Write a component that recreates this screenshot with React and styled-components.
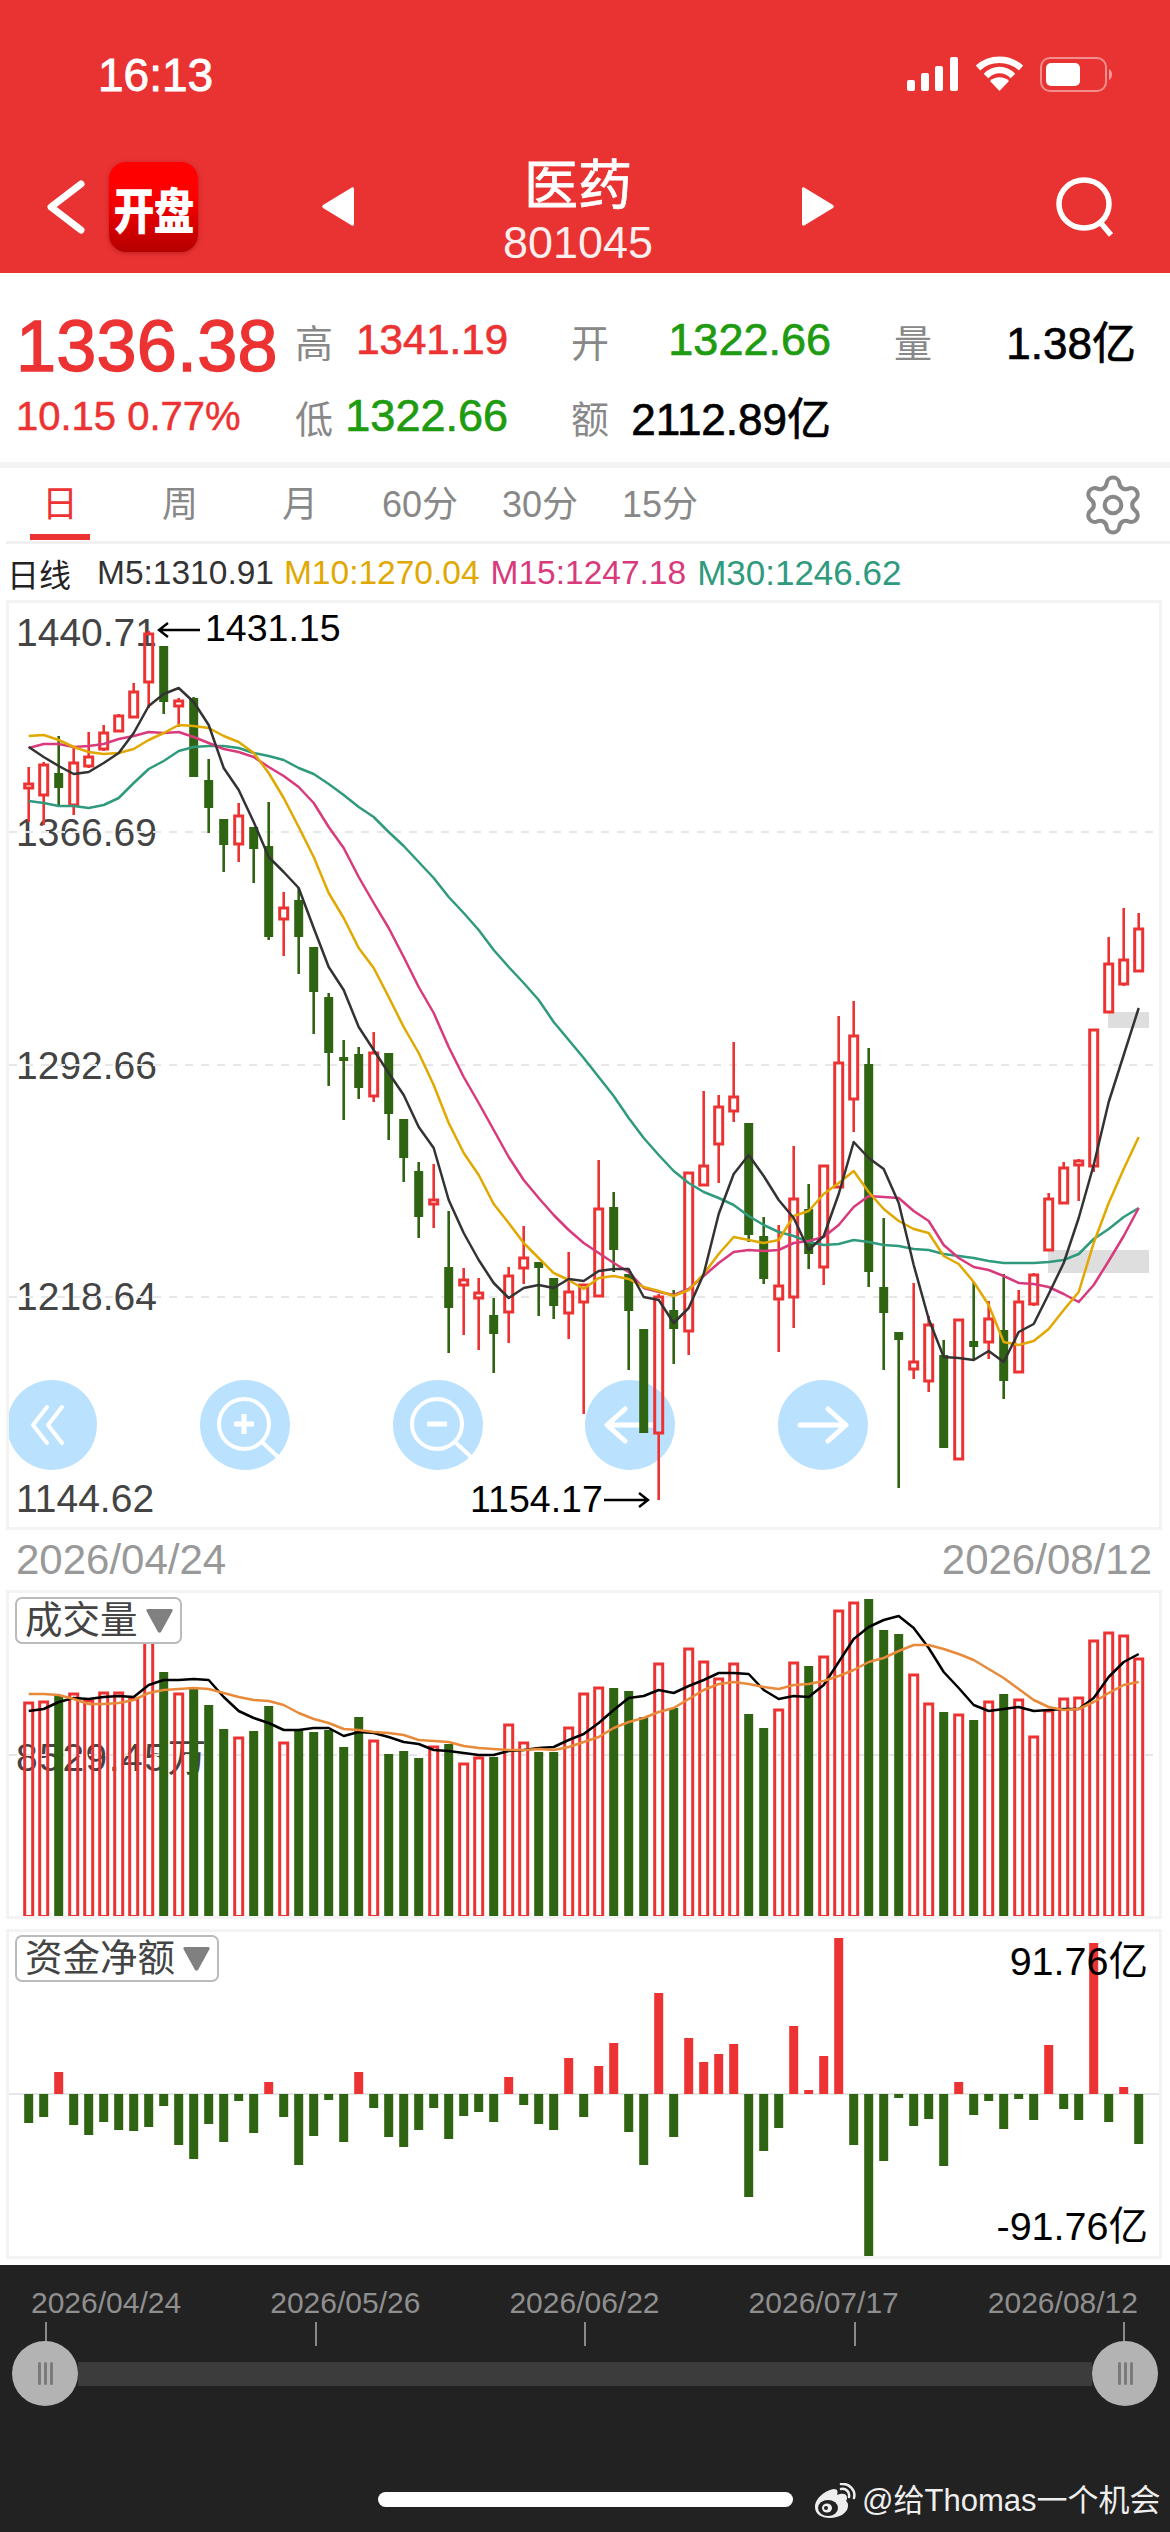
import React from 'react';
import styled, { createGlobalStyle } from 'styled-components';
import { Settings } from 'lucide-react';

const RED = '#ec3232';
const GREEN = '#2f6412';
const FONT = '"Liberation Sans", "Noto Sans CJK SC", sans-serif';

const GlobalStyle = createGlobalStyle`
  html, body {
    margin: 0;
    padding: 0;
    background: #fff;
    font-family: ${FONT};
  }
`;

const Page = styled.div`
  width: 1170px;
  height: 2532px;
  overflow: hidden;
  background: #fff;
  display: flex;
  flex-direction: column;
`;

const Header = styled.header`
  height: 273px;
  flex: none;
  background: #e93232;
  color: #fff;
`;

const StatusBar = styled.div`
  height: 160px;
  box-sizing: border-box;
  padding: 56px 57px 0 98px;
  display: flex;
  align-items: flex-start;
  justify-content: space-between;
`;

const Clock = styled.span`
  font-size: 46px;
  line-height: 38px;
  -webkit-text-stroke: 0.9px #fff;
`;

const StatusIcons = styled.div`
  display: flex;
  align-items: center;
  gap: 16px;
`;

const NavRow = styled.div`
  height: 93px;
  padding-left: 46px;
  padding-right: 54px;
  display: flex;
  align-items: center;
`;

const Logo = styled.div`
  width: 89px;
  height: 90px;
  margin-left: 23px;
  border-radius: 17px;
  background: linear-gradient(#ff0000 35%, #b50000);
  box-shadow: 0 1px 4px rgba(120, 0, 0, 0.4);
  display: flex;
  align-items: center;
  justify-content: center;
  font-size: 41px;
  font-weight: 900;
  letter-spacing: -1px;
  white-space: nowrap;
`;

const LogoText = styled.span`
  display: block;
  transform: scaleY(1.2);
`;

const TitleGroup = styled.div`
  width: 512px;
  margin-left: 124px;
  display: flex;
  align-items: center;
  justify-content: space-between;
`;

const TitleBlock = styled.div`
  margin-top: 16px;
  text-align: center;
`;

const Title = styled.div`
  font-size: 54px;
  line-height: 56px;
  -webkit-text-stroke: 0.8px #fff;
`;

const Code = styled.div`
  font-size: 45px;
  line-height: 58px;
  opacity: 0.92;
`;

const SearchIcon = styled.svg`
  margin-left: auto;
`;

const QuoteBar = styled.section`
  height: 189px;
  flex: none;
  box-sizing: border-box;
  padding: 29px 0 0 16px;
  display: flex;
`;

const PriceCol = styled.div`
  width: 279px;
  color: ${RED};
`;

const Price = styled.div`
  height: 76px;
  font-size: 72px;
  line-height: 88px;
  -webkit-text-stroke: 1.4px ${RED};
  letter-spacing: 0.2px;
`;

const Change = styled.div`
  height: 76px;
  font-size: 40px;
  line-height: 76px;
  -webkit-text-stroke: 0.5px ${RED};
`;

const StatGrid = styled.div`
  display: grid;
  grid-template-columns: 213px 260px 242px;
  grid-auto-rows: 76px;
  column-gap: 63px;
`;

const Stat = styled.div`
  display: flex;
  align-items: center;
  justify-content: space-between;
`;

const StatLabel = styled.span`
  font-size: 38px;
  color: #888;
`;

const StatValue = styled.span`
  font-size: ${(p) => p.$size || 42}px;
  color: ${(p) => p.$color};
  -webkit-text-stroke: 0.7px ${(p) => p.$color};
  white-space: nowrap;
`;

const Tabs = styled.nav`
  height: 79px;
  flex: none;
  box-sizing: border-box;
  border-top: 6px solid #f3f3f3;
  display: flex;
  align-items: center;
  padding-right: 24px;
`;

const Tab = styled.span`
  position: relative;
  width: 120px;
  height: 73px;
  display: flex;
  align-items: center;
  justify-content: center;
  padding-bottom: 8px;
  box-sizing: border-box;
  font-size: 36px;
  color: ${(p) => (p.$active ? RED : '#888')};

  &::after {
    content: '';
    display: ${(p) => (p.$active ? 'block' : 'none')};
    position: absolute;
    left: 30px;
    right: 30px;
    bottom: 1px;
    height: 6px;
    background: ${RED};
  }
`;

const GearButton = styled.span`
  margin-left: auto;
  display: flex;
  color: #888;
`;

const MaRow = styled.div`
  height: 59px;
  flex: none;
  box-sizing: border-box;
  border-top: 3px solid #f1f1f1;
  margin-left: 6px;
  padding-left: 1px;
  padding-top: 1px;
  display: flex;
  align-items: center;
  white-space: nowrap;
`;

const MaLabel = styled.span`
  font-size: ${(p) => p.$size || 33.5}px;
  color: ${(p) => p.$color};
  margin-right: ${(p) => p.$gap}px;
`;

const ChartPanel = styled.div`
  position: relative;
  flex: none;
  width: 1156px;
  height: ${(p) => p.$height}px;
  margin-left: 6px;
  margin-top: ${(p) => p.$top || 0}px;
  box-sizing: border-box;
  border: 3px solid #f3f3f3;
  overflow: hidden;
`;

const ChartSvg = styled.svg`
  display: block;
  position: relative;
`;

const ButtonRow = styled.div`
  position: absolute;
  top: 777px;
  left: -2px;
  display: flex;
  gap: 102.75px;
`;

const RoundButton = styled.div`
  width: 90px;
  height: 90px;
  border-radius: 50%;
  background: #bae2fe;
  display: flex;
  align-items: center;
  justify-content: center;
`;

const AxisLabel = styled.span`
  position: absolute;
  left: 7px;
  top: ${(p) => p.$y}px;
  transform: translateY(-50%);
  font-size: 39px;
  line-height: 1;
  color: #444;
  letter-spacing: ${(p) => p.$spacing || 0}px;
  white-space: nowrap;
`;

const MarkLabel = styled.span`
  position: absolute;
  left: ${(p) => p.$x}px;
  top: ${(p) => p.$y}px;
  transform: translateY(-50%);
  font-size: 37.5px;
  line-height: 1;
  color: #000;
  white-space: nowrap;
`;

const RangeLabel = styled.span`
  position: absolute;
  right: 11px;
  top: ${(p) => p.$y}px;
  transform: translateY(-50%);
  font-size: 39.5px;
  line-height: 1;
  color: #000;
  white-space: nowrap;
`;

const DateRow = styled.div`
  height: 60px;
  flex: none;
  box-sizing: border-box;
  padding: 0 18px 0 16px;
  display: flex;
  align-items: center;
  justify-content: space-between;
  font-size: 42px;
  color: #999;
`;

const IndicatorSelect = styled.div`
  position: absolute;
  left: 6px;
  top: ${(p) => p.$top}px;
  height: 47px;
  box-sizing: border-box;
  padding: 0 7px 0 8px;
  display: flex;
  align-items: center;
  gap: 8px;
  border: 2px solid #bbb;
  border-radius: 7px;
  background: #fff;
  font-size: 37.5px;
  line-height: 1;
  color: #444;
`;

const Footer = styled.footer`
  flex: 1;
  margin-top: 6px;
  background: #222;
  display: flex;
  flex-direction: column;
`;

const FooterDates = styled.div`
  margin-top: 22px;
  padding: 0 32px 0 31px;
  display: flex;
  justify-content: space-between;
  font-size: 30px;
  line-height: 32px;
  color: #8f8f8f;
`;

const TickRow = styled.div`
  margin-top: 3px;
  padding: 0 45px;
  display: flex;
  justify-content: space-between;
`;

const Tick = styled.span`
  width: 2px;
  height: 24px;
  background: #8a8a8a;
`;

const Slider = styled.div`
  margin: -5px 12px 0;
  display: flex;
  align-items: center;
`;

const Handle = styled.div`
  width: 66px;
  height: 65px;
  flex: none;
  border-radius: 50%;
  background: #b3b3b3;
  display: flex;
  align-items: center;
  justify-content: center;
  gap: 3px;
`;

const Grip = styled.span`
  width: 3px;
  height: 23px;
  border-radius: 2px;
  background: #7a7a7a;
`;

const Track = styled.div`
  flex: 1;
  height: 24px;
  background: #3c3c3c;
`;

const BottomRow = styled.div`
  margin-top: 77px;
  padding-left: 378px;
  display: flex;
  align-items: center;
`;

const HomeBar = styled.div`
  width: 415px;
  height: 15px;
  border-radius: 8px;
  background: #fff;
  margin-top: -3px;
`;

const WeiboMark = styled.div`
  margin-left: 19px;
  display: flex;
  align-items: center;
  gap: 6px;
  color: #eee;
  font-size: 31px;
  line-height: 36px;
  white-space: nowrap;
`;

// [wick top, body top, body bottom, wick bottom, up?] in page pixels
const CANDLES = [
  [767, 783, 788, 822, 1], [762, 764, 795, 825, 1], [736, 773, 788, 805, 0], [748, 762, 805, 815, 1],
  [732, 756, 766, 768, 1], [725, 732, 749, 751, 1], [714, 715, 731, 732, 1], [683, 691, 717, 718, 1],
  [631, 633, 682, 708, 1], [646, 646, 702, 714, 0], [698, 700, 706, 727, 1], [697, 698, 777, 777, 0],
  [759, 780, 808, 833, 0], [819, 819, 845, 872, 0], [803, 815, 844, 862, 1], [827, 827, 849, 883, 0],
  [802, 846, 937, 940, 0], [892, 907, 919, 956, 1], [888, 900, 937, 974, 0], [947, 947, 992, 1034, 0],
  [993, 997, 1053, 1086, 0], [1040, 1057, 1061, 1120, 0], [1047, 1054, 1088, 1099, 0], [1032, 1052, 1096, 1102, 1],
  [1053, 1053, 1114, 1140, 0], [1119, 1119, 1158, 1182, 0], [1162, 1171, 1217, 1238, 0], [1164, 1199, 1204, 1228, 1],
  [1211, 1267, 1308, 1353, 0], [1268, 1279, 1285, 1335, 1], [1278, 1292, 1298, 1350, 1], [1298, 1315, 1334, 1373, 0],
  [1267, 1275, 1312, 1343, 1], [1226, 1257, 1268, 1284, 1], [1262, 1262, 1268, 1316, 0], [1278, 1278, 1306, 1319, 0],
  [1252, 1291, 1313, 1339, 1], [1284, 1284, 1302, 1414, 1], [1160, 1208, 1296, 1297, 1], [1192, 1207, 1250, 1272, 0],
  [1274, 1274, 1311, 1370, 0], [1329, 1329, 1433, 1433, 0], [1294, 1296, 1433, 1500, 1], [1290, 1310, 1329, 1364, 0],
  [1172, 1172, 1331, 1355, 1], [1091, 1165, 1185, 1185, 1], [1095, 1106, 1144, 1183, 1], [1042, 1096, 1111, 1122, 1],
  [1123, 1123, 1235, 1242, 0], [1217, 1236, 1279, 1284, 0], [1225, 1285, 1299, 1352, 1], [1146, 1198, 1297, 1328, 1],
  [1184, 1209, 1254, 1269, 0], [1165, 1165, 1267, 1285, 1], [1016, 1062, 1187, 1187, 1], [1001, 1035, 1099, 1132, 1],
  [1048, 1064, 1272, 1287, 0], [1218, 1287, 1313, 1370, 0], [1332, 1332, 1340, 1488, 0], [1283, 1361, 1369, 1379, 1],
  [1316, 1324, 1381, 1392, 1], [1340, 1355, 1448, 1448, 0], [1319, 1319, 1459, 1459, 1], [1282, 1341, 1347, 1360, 0],
  [1301, 1318, 1342, 1359, 1], [1274, 1330, 1381, 1399, 0], [1290, 1301, 1372, 1373, 1], [1273, 1274, 1304, 1306, 1],
  [1193, 1198, 1250, 1250, 1], [1162, 1167, 1203, 1203, 1], [1159, 1160, 1165, 1201, 1], [1029, 1029, 1166, 1172, 1],
  [937, 963, 1012, 1012, 1], [908, 959, 984, 986, 1], [913, 928, 971, 971, 1],
];

const MA5 = [
  747, 757, 766, 774, 772, 763, 753, 733, 706, 694, 688, 702, 725, 768, 790, 822, 857, 872, 888, 928,
  967, 990, 1027, 1050, 1073, 1095, 1127, 1148, 1200, 1233, 1260, 1283, 1298, 1288, 1285, 1288, 1279, 1281, 1271,
  1269, 1269, 1297, 1300, 1323, 1308, 1274, 1214, 1174, 1155, 1176, 1200, 1218, 1250, 1236, 1194, 1142, 1158, 1169, 1203,
  1265, 1319, 1357, 1358, 1360, 1351, 1362, 1332, 1324, 1294, 1263, 1218, 1165, 1102, 1055, 1008,
];
const MA10 = [
  736, 735, 740, 747, 752, 754, 753, 749, 740, 733, 725, 726, 728, 736, 742, 753, 773, 798, 827, 857,
  893, 918, 948, 968, 997, 1027, 1053, 1085, 1123, 1153, 1175, 1204, 1223, 1243, 1258, 1273, 1280, 1289, 1278,
  1276, 1279, 1287, 1291, 1296, 1290, 1274, 1254, 1237, 1240, 1243, 1240, 1216, 1211, 1194, 1183, 1171, 1192, 1209, 1221,
  1229, 1233, 1256, 1264, 1282, 1305, 1342, 1345, 1341, 1329, 1310, 1292, 1243, 1203, 1169, 1137,
];
const MA15 = [
  748, 744, 744, 747, 746, 744, 739, 736, 732, 733, 732, 737, 743, 749, 752, 757, 767, 776, 787, 803,
  827, 848, 877, 903, 928, 957, 987, 1013, 1047, 1077, 1103, 1130, 1157, 1180, 1198, 1215, 1230, 1243, 1253,
  1263, 1272, 1288, 1292, 1295, 1289, 1276, 1263, 1252, 1250, 1251, 1250, 1243, 1241, 1237, 1225, 1207, 1196, 1197, 1198,
  1211, 1221, 1245, 1258, 1267, 1270, 1276, 1283, 1284, 1287, 1294, 1302, 1285, 1261, 1236, 1208,
];
const MA30 = [
  801, 803, 806, 806, 808, 805, 798, 783, 769, 761, 751, 747, 746, 746, 748, 753, 756, 760, 768, 774,
  784, 795, 807, 817, 832, 846, 862, 878, 897, 913, 930, 950, 967, 983, 1000, 1022, 1040, 1058, 1077,
  1096, 1118, 1138, 1155, 1171, 1183, 1192, 1198, 1205, 1216, 1225, 1232, 1236, 1242, 1245, 1244, 1240, 1242, 1245, 1246,
  1249, 1250, 1254, 1256, 1258, 1261, 1263, 1263, 1263, 1262, 1260, 1254, 1239, 1229, 1217, 1208,
];

const VOLUME = [
  1702, 1701, 1695, 1693, 1700, 1692, 1692, 1698, 1640, 1672, 1693, 1688, 1705, 1729, 1737, 1731, 1706, 1742, 1730, 1732,
  1730, 1747, 1717, 1740, 1754, 1751, 1758, 1746, 1744, 1763, 1757, 1757, 1724, 1742, 1752, 1752, 1727, 1693, 1687, 1688,
  1691, 1717, 1663, 1708, 1648, 1661, 1678, 1663, 1714, 1728, 1709, 1662, 1666, 1656, 1610, 1602, 1599, 1630, 1634, 1674,
  1703, 1712, 1714, 1720, 1701, 1694, 1699, 1736, 1710, 1698, 1697, 1640, 1632, 1635, 1658,
];
const VOL_FAST = [
  1711, 1709, 1702, 1698, 1699, 1697, 1696, 1697, 1685, 1680, 1680, 1679, 1680, 1697, 1711, 1718, 1723, 1730, 1730, 1728,
  1728, 1736, 1732, 1733, 1737, 1742, 1744, 1750, 1751, 1753, 1755, 1755, 1751, 1750, 1748, 1747, 1740, 1734, 1723, 1710,
  1698, 1696, 1690, 1693, 1686, 1680, 1673, 1673, 1674, 1690, 1699, 1696, 1697, 1685, 1662, 1639, 1627, 1620, 1616, 1628,
  1648, 1672, 1688, 1705, 1711, 1709, 1707, 1711, 1710, 1709, 1709, 1698, 1677, 1662, 1654,
];
const VOL_SLOW = [
  1694, 1694, 1695, 1699, 1704, 1704, 1703, 1700, 1693, 1690, 1689, 1688, 1689, 1693, 1697, 1700, 1701, 1705, 1713, 1719,
  1723, 1729, 1730, 1732, 1733, 1735, 1740, 1741, 1742, 1746, 1748, 1749, 1750, 1750, 1749, 1750, 1747, 1742, 1737, 1728,
  1722, 1718, 1712, 1708, 1699, 1690, 1684, 1682, 1684, 1687, 1689, 1685, 1684, 1681, 1676, 1670, 1662, 1658, 1651, 1645,
  1645, 1649, 1654, 1660, 1669, 1678, 1689, 1700, 1707, 1710, 1709, 1702, 1693, 1685, 1682,
];

const ZERO_Y = 2094;
const NET_FLOW = [
  2123, 2117, 2072, 2125, 2135, 2122, 2130, 2131, 2127, 2106, 2145, 2159, 2124, 2142, 2101, 2133, 2082, 2117, 2165, 2136,
  2100, 2142, 2072, 2108, 2137, 2147, 2130, 2108, 2139, 2116, 2112, 2122, 2077, 2105, 2124, 2130, 2058, 2117, 2066, 2043,
  2132, 2165, 1993, 2137, 2038, 2062, 2054, 2044, 2197, 2151, 2128, 2026, 2090, 2056, 1938, 2145, 2256, 2161, 2098, 2126,
  2119, 2166, 2082, 2115, 2101, 2129, 2099, 2120, 2045, 2109, 2120, 1943, 2122, 2087, 2144,
];

const BAR_X = (i) => 28.7 + 15 * i;
const toPoints = (list) => list.map((y, i) => `${BAR_X(i)},${y}`).join(' ');

function Candle({ index, data }) {
  const [high, top, bottom, low, up] = data;
  const x = BAR_X(index);
  if (up) {
    return (
      <g stroke={RED} fill="none">
        <line x1={x} x2={x} y1={high} y2={top} strokeWidth="2.6" />
        <line x1={x} x2={x} y1={bottom} y2={low} strokeWidth="2.6" />
        <rect x={x - 4} y={top + 1} width="8" height={Math.max(bottom - top - 1, 2)} strokeWidth="3" />
      </g>
    );
  }
  return (
    <g fill={GREEN}>
      <rect x={x - 1.3} y={high} width="2.6" height={low - high} />
      <rect x={x - 4.5} y={top} width="9" height={Math.max(bottom - top, 3)} />
    </g>
  );
}

function Line({ points, color, width = 2.5 }) {
  return <polyline points={toPoints(points)} fill="none" stroke={color} strokeWidth={width} strokeLinejoin="round" />;
}

function GridLine({ y, color = '#e8e8e8' }) {
  return <line x1="9" x2="1160" y1={y} y2={y} stroke={color} strokeWidth="2" strokeDasharray="8 8" />;
}

function PriceChart() {
  return (
    <ChartSvg width="1150" height="924" viewBox="9 603 1150 924">
      <GridLine y={832} />
      <GridLine y={1065} />
      <GridLine y={1297} />
      <rect x="1048" y="1250" width="101" height="23" fill="#dedede" />
      <rect x="1108" y="1012" width="41" height="16" fill="#dedede" />
      {CANDLES.map((c, i) => (
        <Candle key={i} index={i} data={c} />
      ))}
      <Line points={MA30} color="#2f9a7e" />
      <Line points={MA15} color="#d83a7c" />
      <Line points={MA10} color="#e0a800" />
      <Line points={MA5} color="#333" />
      <path d="M200 630H159M168 623l-9 7 9 7" fill="none" stroke="#000" strokeWidth="2.4" />
      <path d="M604 1500H648M639 1493l9 7-9 7" fill="none" stroke="#000" strokeWidth="2.4" />
    </ChartSvg>
  );
}

function VolumeChart() {
  return (
    <ChartSvg width="1150" height="323" viewBox="9 1593 1150 323">
      <GridLine y={1755} color="#e6e6e6" />
      {VOLUME.map((top, i) =>
        CANDLES[i][4] ? (
          <rect key={i} x={BAR_X(i) - 4} y={top + 1} width="8" height={1915.5 - top} fill="none" stroke={RED} strokeWidth="3" />
        ) : (
          <rect key={i} x={BAR_X(i) - 4.5} y={top} width="9" height={1917 - top} fill={GREEN} />
        ),
      )}
      <Line points={VOL_FAST} color="#000" />
      <Line points={VOL_SLOW} color="#e88a3a" />
    </ChartSvg>
  );
}

function FlowChart() {
  return (
    <ChartSvg width="1150" height="324" viewBox="9 1932 1150 324">
      <line x1="9" x2="1160" y1={ZERO_Y} y2={ZERO_Y} stroke="#e6e6e6" strokeWidth="2" />
      {NET_FLOW.map((y, i) =>
        y < ZERO_Y ? (
          <rect key={i} x={BAR_X(i) - 4.5} y={y} width="9" height={ZERO_Y - y} fill={RED} />
        ) : (
          <rect key={i} x={BAR_X(i) - 4.5} y={ZERO_Y} width="9" height={y - ZERO_Y} fill={GREEN} />
        ),
      )}
    </ChartSvg>
  );
}

const whiteStroke = { fill: 'none', stroke: '#fff', strokeLinecap: 'round', strokeLinejoin: 'round' };

function ChevronsLeft() {
  return (
    <svg width="44" height="44" viewBox="0 0 44 44" {...whiteStroke} strokeWidth="4" style={{ marginLeft: -6 }}>
      <path d="M20 4 6 22l14 18M35 4 21 22l14 18" />
    </svg>
  );
}

function ZoomIcon({ plus }) {
  return (
    <svg width="72" height="72" viewBox="0 0 72 72" {...whiteStroke} strokeWidth="4" strokeLinecap="butt" style={{ marginLeft: 6, marginTop: 6 }}>
      <circle cx="32" cy="32" r="25" />
      <path d="M50 50 66 65" />
      <path d="M22 32h20" strokeWidth="5" />
      {plus && <path d="M32 22v20" strokeWidth="5" />}
    </svg>
  );
}

function ArrowIcon({ right }) {
  return (
    <svg width="52" height="40" viewBox="0 0 52 40" {...whiteStroke} strokeWidth="5">
      {right ? <path d="M3 20h45M31 4l18 16-18 16" /> : <path d="M49 20H4M21 4 3 20l18 16" />}
    </svg>
  );
}

function Triangle({ right }) {
  return (
    <svg width="33" height="39" viewBox="0 0 33 39" fill="#fff">
      <path d={right ? 'M1 2c0-2 2-2 3-1l28 17c1 1 1 2 0 3L4 38c-1 1-3 1-3-1z' : 'M32 2c0-2-2-2-3-1L1 18c-1 1-1 2 0 3l28 17c1 1 3 1 3-1z'} />
    </svg>
  );
}

function SignalIcon() {
  return (
    <svg width="52" height="34" viewBox="0 0 52 34" fill="#fff">
      <rect x="0" y="23" width="8" height="11" rx="2" />
      <rect x="14" y="16" width="8" height="18" rx="2" />
      <rect x="28" y="9" width="8" height="25" rx="2" />
      <rect x="43" y="0" width="8" height="34" rx="2" />
    </svg>
  );
}

function WifiIcon() {
  return (
    <svg width="49" height="36" viewBox="0 0 49 36" fill="none" stroke="#fff" strokeWidth="6.5">
      <path d="M3 12C15 1 34 1 46 12" />
      <path d="M11 20C19 12 30 12 38 20" />
      <path d="M24.5 35 15 25c5-5 14-5 19 0z" fill="#fff" stroke="none" />
    </svg>
  );
}

function BatteryIcon() {
  return (
    <svg width="73" height="35" viewBox="0 0 73 35">
      <rect x="1" y="1" width="65" height="33" rx="9" fill="none" stroke="#fff" strokeOpacity="0.45" strokeWidth="2" />
      <rect x="6" y="6" width="34" height="23" rx="5" fill="#fff" />
      <path d="M69 12c2 1 3 3 3 5.500s-1 4.500-3 5.500z" fill="#fff" fillOpacity="0.5" />
    </svg>
  );
}

function WeiboIcon() {
  return (
    <svg width="44" height="36" viewBox="0 0 44 36">
      <path d="M3 24C3 15 14 7 22 6c4 0 4 3 3 6 5-2 10-2 10 3 0 2-1 3-1 3 2 2 2 3 2 5 0 7-9 12-18 12C9 35 3 31 3 24z" fill="#eee" />
      <ellipse cx="16" cy="25" rx="10" ry="8" fill="#222" />
      <ellipse cx="15" cy="25" rx="5" ry="4.500" fill="#eee" />
      <circle cx="14" cy="25" r="2" fill="#222" />
      <path d="M29 6c5-1 9 3 8 8M29 1c8-1 15 6 13 14" fill="none" stroke="#eee" strokeWidth="2.500" strokeLinecap="round" />
    </svg>
  );
}

const CaretIcon = () => (
  <svg width="27" height="24" viewBox="0 0 27 24" fill="#808080">
    <path d="M2 0h23c2 0 2 2 1 3L15 23c-1 1-2 1-3 0L1 3C0 2 0 0 2 0z" />
  </svg>
);

export default function App() {
  return (
    <Page>
      <GlobalStyle />
      <Header>
        <StatusBar>
          <Clock>16:13</Clock>
          <StatusIcons>
            <SignalIcon />
            <WifiIcon />
            <BatteryIcon />
          </StatusIcons>
        </StatusBar>
        <NavRow>
          <svg width="40" height="54" viewBox="0 0 40 54" fill="none" stroke="#fff" strokeWidth="7" strokeLinecap="round" strokeLinejoin="round">
            <path d="M35 4 5 27l30 23" />
          </svg>
          <Logo>
            <LogoText>开盘</LogoText>
          </Logo>
          <TitleGroup>
            <Triangle />
            <TitleBlock>
              <Title>医药</Title>
              <Code>801045</Code>
            </TitleBlock>
            <Triangle right />
          </TitleGroup>
          <SearchIcon width="60" height="60" viewBox="0 0 60 60" fill="none" stroke="#fff" strokeWidth="5.500">
            <ellipse cx="28" cy="27" rx="25" ry="24" />
            <path d="M44 45 55 58" />
          </SearchIcon>
        </NavRow>
      </Header>

      <QuoteBar>
        <PriceCol>
          <Price>1336.38</Price>
          <Change>10.15 0.77%</Change>
        </PriceCol>
        <StatGrid>
          <Stat>
            <StatLabel>高</StatLabel>
            <StatValue $color={RED}>1341.19</StatValue>
          </Stat>
          <Stat>
            <StatLabel>开</StatLabel>
            <StatValue $color="#1e9b10" $size={45}>1322.66</StatValue>
          </Stat>
          <Stat>
            <StatLabel>量</StatLabel>
            <StatValue $color="#000" $size={44}>1.38亿</StatValue>
          </Stat>
          <Stat>
            <StatLabel>低</StatLabel>
            <StatValue $color="#1e9b10" $size={45}>1322.66</StatValue>
          </Stat>
          <Stat>
            <StatLabel>额</StatLabel>
            <StatValue $color="#000" $size={44}>2112.89亿</StatValue>
          </Stat>
        </StatGrid>
      </QuoteBar>

      <Tabs>
        <Tab $active>日</Tab>
        <Tab>周</Tab>
        <Tab>月</Tab>
        <Tab>60分</Tab>
        <Tab>30分</Tab>
        <Tab>15分</Tab>
        <GearButton>
          <Settings size={66} strokeWidth={1.5} />
        </GearButton>
      </Tabs>

      <MaRow>
        <MaLabel $color="#222" $gap={26} $size={32}>日线</MaLabel>
        <MaLabel $color="#333" $gap={10}>M5:1310.91</MaLabel>
        <MaLabel $color="#e0a800" $gap={11}>M10:1270.04</MaLabel>
        <MaLabel $color="#d83a7c" $gap={11}>M15:1247.18</MaLabel>
        <MaLabel $color="#2f9a7e" $gap={0} $size={35}>M30:1246.62</MaLabel>
      </MaRow>

      <ChartPanel $height={930}>
        <ButtonRow>
          <RoundButton><ChevronsLeft /></RoundButton>
          <RoundButton><ZoomIcon plus /></RoundButton>
          <RoundButton><ZoomIcon /></RoundButton>
          <RoundButton><ArrowIcon /></RoundButton>
          <RoundButton><ArrowIcon right /></RoundButton>
        </ButtonRow>
        <AxisLabel $y={29}>1440.71</AxisLabel>
        <AxisLabel $y={229}>1366.69</AxisLabel>
        <AxisLabel $y={462}>1292.66</AxisLabel>
        <AxisLabel $y={693}>1218.64</AxisLabel>
        <AxisLabel $y={895}>1144.62</AxisLabel>
        <PriceChart />
        <MarkLabel $x={196} $y={26}>1431.15</MarkLabel>
        <MarkLabel $x={461} $y={897}>1154.17</MarkLabel>
      </ChartPanel>

      <DateRow>
        <span>2026/04/24</span>
        <span>2026/08/12</span>
      </DateRow>

      <ChartPanel $height={329}>
        <AxisLabel $y={164} $spacing={1.5}>8529.45万</AxisLabel>
        <VolumeChart />
        <IndicatorSelect $top={4}>
          成交量
          <CaretIcon />
        </IndicatorSelect>
      </ChartPanel>

      <ChartPanel $height={330} $top={10}>
        <FlowChart />
        <IndicatorSelect $top={3}>
          资金净额
          <CaretIcon />
        </IndicatorSelect>
        <RangeLabel $y={30}>91.76亿</RangeLabel>
        <RangeLabel $y={295}>-91.76亿</RangeLabel>
      </ChartPanel>

      <Footer>
        <FooterDates>
          <span>2026/04/24</span>
          <span>2026/05/26</span>
          <span>2026/06/22</span>
          <span>2026/07/17</span>
          <span>2026/08/12</span>
        </FooterDates>
        <TickRow>
          <Tick />
          <Tick />
          <Tick />
          <Tick />
          <Tick />
        </TickRow>
        <Slider>
          <Handle>
            <Grip />
            <Grip />
            <Grip />
          </Handle>
          <Track />
          <Handle>
            <Grip />
            <Grip />
            <Grip />
          </Handle>
        </Slider>
        <BottomRow>
          <HomeBar />
          <WeiboMark>
            <WeiboIcon />
            <span>@给Thomas一个机会</span>
          </WeiboMark>
        </BottomRow>
      </Footer>
    </Page>
  );
}
